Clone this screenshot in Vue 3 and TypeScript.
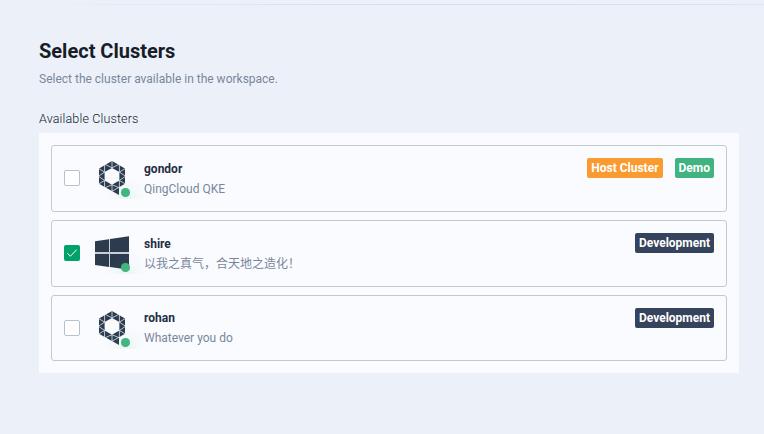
<script setup lang="ts">
interface Tag {
  label: string
  tone: string
}
interface Cluster {
  name: string
  description: string
  provider: 'qingcloud' | 'windows'
  checked: boolean
  tags: Tag[]
}

const clusters: Cluster[] = [
  {
    name: 'gondor',
    description: 'QingCloud QKE',
    provider: 'qingcloud',
    checked: false,
    tags: [
      { label: 'Host Cluster', tone: 'host' },
      { label: 'Demo', tone: 'demo' },
    ],
  },
  {
    name: 'shire',
    description: '以我之真气，合天地之造化！',
    provider: 'windows',
    checked: true,
    tags: [{ label: 'Development', tone: 'development' }],
  },
  {
    name: 'rohan',
    description: 'Whatever you do',
    provider: 'qingcloud',
    checked: false,
    tags: [{ label: 'Development', tone: 'development' }],
  },
]
</script>

<template>
  <main class="page">
    <div class="divider"></div>
    <header>
      <h1>Select Clusters</h1>
      <p class="subtitle">Select the cluster available in the workspace.</p>
    </header>
    <div class="label">Available Clusters</div>
    <section class="panel">
      <article v-for="cluster in clusters" :key="cluster.name" class="card">
        <span class="checkbox" :class="{ checked: cluster.checked }">
          <svg v-if="cluster.checked" viewBox="0 0 16 16" width="16" height="16">
            <path d="M3.4 8.2 6.4 11.2 12.6 4.7" fill="none" stroke="#fff" stroke-width="1" />
          </svg>
        </span>
        <div class="icon">
          <svg v-if="cluster.provider === 'qingcloud'" viewBox="0 0 40 40" width="40" height="40">
            <path
              fill="#2c3b4e"
              fill-rule="evenodd"
              d="M20 3 33 10.4V25.8L27 29.3V37L7 25.8V10.4ZM20 9.9 12.6 14.1V22.5L20 26.7 27.4 22.5V14.1Z"
            />
            <path
              fill="none"
              stroke="#e6eaf0"
              stroke-width=".8"
              d="M20 2.5V9.9M12.6 6.5V14.1L6.5 10.4M27.4 6.5V14.1L33.5 10.4M13.2 6.4 20 9.9 26.8 6.4M6.5 18.3 12.6 14.1M6.5 18.3 12.6 22.5M33.5 18.3 27.4 14.1M33.5 18.3 27.4 22.5M6.5 26 12.6 22.5V29.7M13.2 29.7 20 26.7V33.5M33.5 26 27.4 22.5V29.5M20 26.7 27 29.7M20 33.2 27 29.3"
            />
          </svg>
          <svg v-else viewBox="0 0 40 40" width="40" height="40">
            <path
              fill="#2c3b4e"
              d="M3 8.2 17 6.2V19.3H3ZM18 6 37 3.3V19.3H18ZM3 20.7H17V33.9L3 31.9ZM18 20.7H37V36.8L18 34Z"
            />
            <path fill="#cdcfd8" d="M3 19.2H37V20.8H3ZM17 6.2H18V34H17Z" />
          </svg>
          <span class="glow"><i class="status"></i></span>
        </div>
        <div class="info">
          <div class="name">{{ cluster.name }}</div>
          <div class="description">{{ cluster.description }}</div>
        </div>
        <div class="tags">
          <span v-for="tag in cluster.tags" :key="tag.label" class="tag" :class="tag.tone">{{ tag.label }}</span>
        </div>
      </article>
    </section>
  </main>
</template>

<style>
body {
  margin: 0;
}
</style>

<style scoped>
.page {
  box-sizing: border-box;
  width: 764px;
  height: 434px;
  padding: 4px 25px 0 39px;
  overflow: hidden;
  background: #ecf1f9;
  font-family: Roboto, "Noto Sans CJK SC", sans-serif;
  font-size: 12px;
}
.divider {
  height: 1px;
  margin: 0 -25px 0 -39px;
  background: linear-gradient(to right, #ecf1f9, #d7deea 50%, #d7deea 75%, #dfe5ee);
}
h1 {
  margin: 0;
  padding-top: 30px;
  font-size: 20px;
  line-height: 32px;
  font-weight: 700;
  color: #181d28;
}
.subtitle {
  margin: 2px 0 0;
  line-height: 20px;
  color: #79879c;
}
.label {
  margin-top: 20px;
  height: 24px;
  line-height: 20px;
  font-size: 12.5px;
  font-weight: 300;
  letter-spacing: 0.15px;
  color: #10182a;
}
.panel {
  display: flex;
  flex-direction: column;
  gap: 8px;
  box-sizing: border-box;
  height: 240px;
  padding: 12px;
  background: #f9fbfe;
}
.card {
  display: flex;
  box-sizing: border-box;
  height: 67px;
  padding: 12px;
  border: 1px solid #c1c9d1;
  border-radius: 3px;
}
.card:last-child {
  height: 66px;
}
.checkbox {
  box-sizing: border-box;
  width: 16px;
  height: 16px;
  margin-top: 12px;
  border: 1px solid #b6c2cd;
  border-radius: 2px;
  background: #fff;
}
.checkbox.checked {
  border: 0;
  background: #00a26a;
}
.checkbox svg,
.icon svg {
  display: block;
}
.icon {
  position: relative;
  width: 40px;
  height: 40px;
  margin: 0 12px;
}
.glow {
  position: absolute;
  left: 8px;
  top: 12px;
  width: 44px;
  height: 29px;
  overflow: hidden;
}
.status {
  position: absolute;
  left: 21.3px;
  top: 18.3px;
  width: 8.5px;
  height: 8.5px;
  border-radius: 50%;
  background: #42b67f;
  box-shadow: 0 6px 16px 1px rgba(85, 188, 138, 0.36);
}
.info {
  flex: 1;
}
.name {
  line-height: 20px;
  margin-top: 1px;
  font-weight: 700;
  color: #242e42;
}
.description {
  line-height: 20px;
  color: #79879c;
}
.card:last-child .name {
  margin-top: 0;
}
.tags {
  display: flex;
  align-items: flex-start;
  gap: 12px;
}
.tag {
  height: 20px;
  padding: 0 4px;
  border-radius: 2px;
  line-height: 20px;
  font-weight: 700;
  color: #fff;
}
.host {
  background: #f99b30;
}
.demo {
  background: #40b380;
}
.development {
  background: #36435c;
}
</style>
